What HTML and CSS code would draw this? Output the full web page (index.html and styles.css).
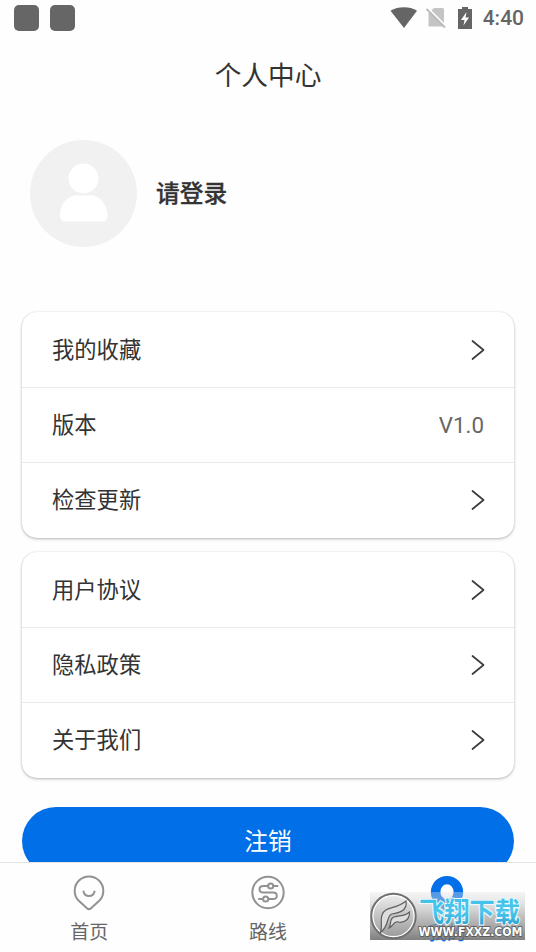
FILE: index.html
```html
<!DOCTYPE html>
<html lang="zh-CN">
<head>
<meta charset="utf-8">
<title>个人中心</title>
<link rel="stylesheet" href="styles.css">
</head>
<body>
<div class="screen">
  <main class="content">
    <div class="status">
      <div class="notices"><i></i><i></i></div>
      <div class="system">
        <svg class="wifi" width="28" height="22" viewBox="0 0 28 22"><path d="M.5 3.800C8-.8 20-.8 27 3.800L14 21Z" fill="#656565"/></svg>
        <svg class="sim" width="20" height="22" viewBox="0 0 20 22"><path d="M8 1h8.500q1.500 0 1.500 1.500v17H2.500V6Z" fill="#c4c4c4"/><path d="M1 1L20 20" stroke="#fff" stroke-width="3"/><path d="M.5 2L19 20.500" stroke="#b9b9b9" stroke-width="1.800"/></svg>
        <svg class="battery" width="14" height="22" viewBox="0 0 14 22"><path d="M4 0h6v2h4v20H0V2h4Z" fill="#656565"/><path d="M8.500 5L3 13h3.500L5.500 18.500 11 10.500H7.500Z" fill="#fff"/></svg>
        <span>4:40</span>
      </div>
    </div>
    <h1>个人中心</h1>
    <section class="profile">
      <svg width="107" height="107" viewBox="0 0 107 107"><circle cx="53.500" cy="53.500" r="53.500" fill="#f1f1f1"/><circle cx="53.500" cy="38.500" r="15" fill="#fff"/><path d="M30 75C30 63 39 55.500 46 55.500H61C70 55.500 77.500 65 77.500 76Q77.500 81.500 72 81.500H35Q30 81.500 30 75Z" fill="#fff"/></svg>
      <strong>请登录</strong>
    </section>
    <section class="card">
      <div class="row"><span>我的收藏</span><svg class="chev" viewBox="0 0 13 20"><path d="M1.500 1L12.500 10 1.500 19"/></svg></div>
      <div class="row"><span>版本</span><span class="version">V1.0</span></div>
      <div class="row"><span>检查更新</span><svg class="chev" viewBox="0 0 13 20"><path d="M1.500 1L12.500 10 1.500 19"/></svg></div>
    </section>
    <section class="card">
      <div class="row"><span>用户协议</span><svg class="chev" viewBox="0 0 13 20"><path d="M1.500 1L12.500 10 1.500 19"/></svg></div>
      <div class="row"><span>隐私政策</span><svg class="chev" viewBox="0 0 13 20"><path d="M1.500 1L12.500 10 1.500 19"/></svg></div>
      <div class="row"><span>关于我们</span><svg class="chev" viewBox="0 0 13 20"><path d="M1.500 1L12.500 10 1.500 19"/></svg></div>
    </section>
    <button class="logout">注销</button>
  </main>
  <nav class="tabs">
    <div class="tab">
      <svg width="36" height="38" viewBox="0 0 36 38"><path d="M7.500 26.500A14.300 14.300 0 1 1 28.500 26.500L20 34.200Q18 36 16 34.200Z"/><path d="M12.500 17.500Q13.500 22 18 22T23.500 17.500"/></svg>
      <span>首页</span>
    </div>
    <div class="tab">
      <svg width="36" height="38" viewBox="0 0 36 38"><circle cx="18" cy="18.500" r="15.700"/><path d="M18 12H13.500Q9.500 12 9.500 15.200T13.500 18.500H23Q26.800 18.500 26.800 21.800T23 25H18.500M23.500 12H27.500M9 25H13"/><circle cx="20.700" cy="12" r="2.600"/><circle cx="15.700" cy="25" r="2.600"/></svg>
      <span>路线</span>
    </div>
    <div class="tab active">
      <svg width="36" height="38" viewBox="0 0 36 38"><path fill-rule="evenodd" d="M7 29A16.200 16.200 0 1 1 29 29L18 37ZM18 9.200a6.600 7.500 0 1 0 0 15 6.600 7.500 0 1 0 0-15Z"/></svg>
      <span>我的</span>
    </div>
  </nav>
  <div class="watermark">
    <svg width="155" height="48" viewBox="0 0 155 48">
      <defs>
        <linearGradient id="shade" x2="0" y2="1"><stop offset="0" stop-color="#e4e4e4" stop-opacity=".35"/><stop offset=".5" stop-color="#aaa" stop-opacity=".72"/><stop offset="1" stop-color="#686868" stop-opacity=".84"/></linearGradient>
        <linearGradient id="cyan" x2="0" y2="1"><stop offset="0" stop-color="#42bce5"/><stop offset=".55" stop-color="#49c7ed"/><stop offset="1" stop-color="#2398cb"/></linearGradient>
        <linearGradient id="disc" x2="0" y2="1"><stop offset="0" stop-color="#eee"/><stop offset="1" stop-color="#999"/></linearGradient>
      </defs>
      <rect width="155" height="48" fill="url(#shade)"/>
      <circle cx="23.500" cy="24" r="22" fill="url(#disc)" stroke="#707070" stroke-width="2.400"/>
      <circle cx="23.500" cy="24" r="20.600" fill="none" stroke="#fff" stroke-width="1.200"/>
      <path d="M10 41C13 37 10 29 12 23C15 14 25 18 36 9C38 19 28 21 22 22C16 23 20 34 10 41ZM19 36C22 31 19 27 24 25C30 23 34 25 39.500 20C40 29 32 31 28 30C23 29 24 34 19 36Z" fill="#ddd" stroke="#606060" stroke-width="1.200"/>
      <text class="brand" x="49" y="29.500" textLength="101" lengthAdjust="spacingAndGlyphs">飞翔下载</text>
      <text class="site" x="48.500" y="44" textLength="104" lengthAdjust="spacingAndGlyphs">WWW.FXXZ.COM</text>
    </svg>
  </div>
</div>
</body>
</html>
```

FILE: styles.css
```css
* { box-sizing: border-box; }
body { margin: 0; background: #fefefe; color: #333; font-family: Roboto, "Noto Sans CJK SC", sans-serif; }
.screen { position: relative; width: 536px; height: 952px; overflow: hidden; display: flex; flex-direction: column; }
.content { height: 862px; flex: none; overflow: hidden; padding: 0 22px; display: flex; flex-direction: column; }
.content > * { flex: none; }
.status { height: 36px; margin: 0 -22px; padding: 0 12px 0 14px; display: flex; justify-content: space-between; align-items: center; }
.notices { display: flex; gap: 11px; }
.notices i { width: 25px; height: 26px; border-radius: 5px; background: #666; }
.system { display: flex; align-items: center; color: #656565; }
.sim { margin-left: 8px; }
.battery { margin-left: 12px; }
.system span { margin-left: 11px; font: 500 21px/26px Roboto, sans-serif; }
h1 { margin: 20px 0 0; height: 40px; text-align: center; font-size: 26.7px; line-height: 40px; font-weight: 400; }
.profile { height: 107px; margin: 44px 0 65px; padding-left: 8px; display: flex; align-items: center; gap: 19px; }
.profile strong { font-size: 23.7px; line-height: 32px; font-weight: 500; -webkit-text-stroke: .3px #333; }
.card { width: 492px; height: 226px; margin-bottom: 14px; border-radius: 15px; background: #fff; box-shadow: 0 1px 3px rgba(0,0,0,.29), 0 0 1px rgba(0,0,0,.1); }
.row { height: 75px; padding: 0 30px; display: flex; justify-content: space-between; align-items: center; font-size: 22.3px; line-height: 30px; }
.row + .row { border-top: 1px solid #e9e9e9; }
.version { color: #666; font-size: 22.3px; }
.chev { width: 13px; height: 20px; overflow: visible; fill: none; stroke: #3c3c3c; stroke-width: 1.7; stroke-linecap: round; stroke-linejoin: round; }
.logout { width: 492px; height: 68px; margin-top: 15px; padding: 2px 0 0; border: 0; border-radius: 34px; background: #006fe8; color: #fff; font: 400 23.7px/66px Roboto, "Noto Sans CJK SC", sans-serif; }
.tabs { height: 90px; display: grid; grid-template-columns: repeat(3, 1fr); border-top: 1px solid #e3e3e3; background: #fefefe; }
.tab { display: flex; flex-direction: column; align-items: center; padding-top: 11px; color: #666; }
.tab svg { fill: none; stroke: #929292; stroke-width: 2; stroke-linecap: round; stroke-linejoin: round; }
.tab span { margin-top: 7px; font-size: 19px; line-height: 28px; }
.tab.active { color: #006fe8; padding-top: 12px; }
.tab.active svg { fill: #006fe8; stroke: none; }
.watermark { position: absolute; left: 370px; top: 892px; height: 48px; }
.watermark svg { display: block; overflow: visible; }
.brand { font: 700 27px "Noto Sans CJK SC", sans-serif; fill: url(#cyan); stroke: #effaff; stroke-width: 2px; paint-order: stroke; }
.site { font: 700 11.5px "DejaVu Sans", sans-serif; fill: #fff; stroke: #555; stroke-width: 1.5px; paint-order: stroke; }
```
